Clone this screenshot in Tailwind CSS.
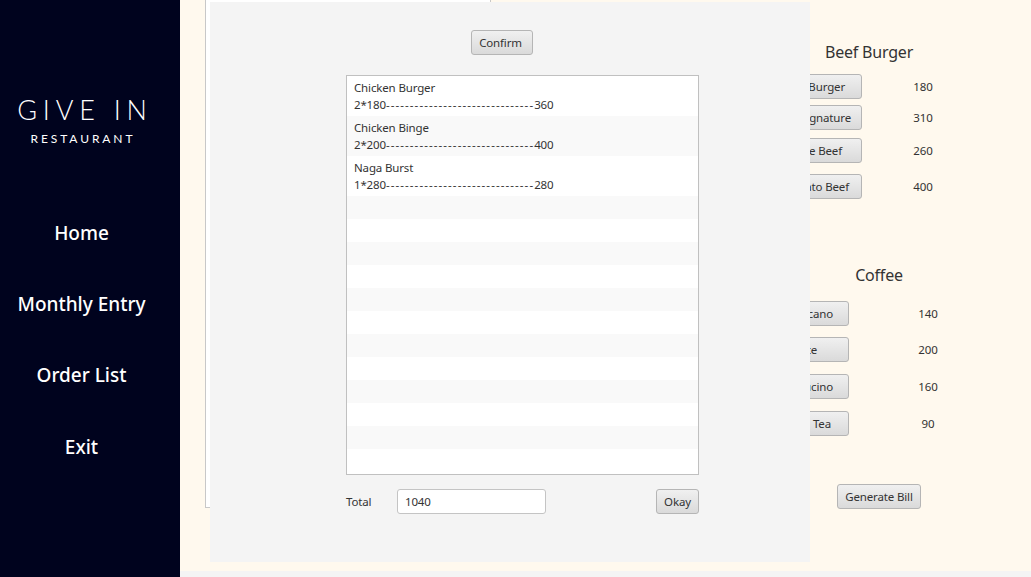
<!DOCTYPE html>
<html>
<head>
<meta charset="utf-8">
<script src="https://cdn.jsdelivr.net/npm/@tailwindcss/browser@4"></script>
</head>
<body class="bg-[#f4f4f4] font-['Noto_Sans',sans-serif] text-[11.5px] tracking-[-0.15px] text-[#333333] overflow-hidden">
<div class="relative flex w-[1031px] h-[577px]">
  <aside class="w-[180px] h-[577px] shrink-0 pr-[17px] bg-[#00031e] text-white flex flex-col items-center">
    <div class="mt-[94px] h-[32px] leading-[32px] text-[27px] font-['Lato',sans-serif] font-light tracking-[5.8px] pl-[7px] whitespace-nowrap">GIVE IN</div>
    <div class="mt-[5px] h-[16px] leading-[16px] text-[12px] font-['Lato',sans-serif] tracking-[2.9px] pl-[3px] whitespace-nowrap">RESTAURANT</div>
    <nav class="mt-[72px] flex flex-col items-center text-[19px] tracking-normal font-medium leading-[28px]">
      <div>Home</div>
      <div class="mt-[43px]">Monthly Entry</div>
      <div class="mt-[43px]">Order List</div>
      <div class="mt-[44px]">Exit</div>
    </nav>
  </aside>
  <main class="flex w-[851px] h-[571px] bg-[#fff9ee]">
    <div class="ml-[25px] w-[286px] h-[508px] shrink-0 bg-white border-l border-r border-b border-[#c8c8c8]"></div>
    <div class="flex-1 flex flex-col pt-[40px]">
      <div class="ml-[278px] w-[200px] h-[24px] leading-[24px] text-center text-[16px] tracking-[-0.2px]">Beef Burger</div>
      <div class="mt-[10px] flex">
        <button class="ml-[221px] w-[150px] h-[25px] pr-[16px] text-right rounded-[3px] border border-[#b5b5b5] bg-linear-to-b from-[#f0f0f0] to-[#dadada]">Beef Burger</button>
        <span class="ml-[41px] w-[40px] leading-[25px] text-center">180</span>
      </div>
      <div class="mt-[6px] flex">
        <button class="ml-[221px] w-[150px] h-[25px] pr-[10px] text-right rounded-[3px] border border-[#b5b5b5] bg-linear-to-b from-[#f0f0f0] to-[#dadada]">Signature</button>
        <span class="ml-[41px] w-[40px] leading-[25px] text-center">310</span>
      </div>
      <div class="mt-[8px] flex">
        <button class="ml-[221px] w-[150px] h-[25px] pr-[19px] text-right rounded-[3px] border border-[#b5b5b5] bg-linear-to-b from-[#f0f0f0] to-[#dadada]">Double Beef</button>
        <span class="ml-[41px] w-[40px] leading-[25px] text-center">260</span>
      </div>
      <div class="mt-[11px] flex">
        <button class="ml-[221px] w-[150px] h-[25px] pr-[12px] text-right rounded-[3px] border border-[#b5b5b5] bg-linear-to-b from-[#f0f0f0] to-[#dadada]">Potato Beef</button>
        <span class="ml-[41px] w-[40px] leading-[25px] text-center">400</span>
      </div>
      <div class="mt-[64px] ml-[288px] w-[200px] h-[24px] leading-[24px] text-center text-[16px] tracking-[-0.2px]">Coffee</div>
      <div class="mt-[14px] flex">
        <button class="ml-[208px] w-[150px] h-[25px] pr-[15px] text-right rounded-[3px] border border-[#b5b5b5] bg-linear-to-b from-[#f0f0f0] to-[#dadada]">Americano</button>
        <span class="ml-[59px] w-[40px] leading-[25px] text-center">140</span>
      </div>
      <div class="mt-[11px] flex">
        <button class="ml-[208px] w-[150px] h-[25px] pr-[31px] text-right rounded-[3px] border border-[#b5b5b5] bg-linear-to-b from-[#f0f0f0] to-[#dadada]">Latte</button>
        <span class="ml-[59px] w-[40px] leading-[25px] text-center">200</span>
      </div>
      <div class="mt-[12px] flex">
        <button class="ml-[208px] w-[150px] h-[25px] pr-[15px] text-right rounded-[3px] border border-[#b5b5b5] bg-linear-to-b from-[#f0f0f0] to-[#dadada]">Cappucino</button>
        <span class="ml-[59px] w-[40px] leading-[25px] text-center">160</span>
      </div>
      <div class="mt-[12px] flex">
        <button class="ml-[208px] w-[150px] h-[25px] pr-[17px] text-right rounded-[3px] border border-[#b5b5b5] bg-linear-to-b from-[#f0f0f0] to-[#dadada]">Green Tea</button>
        <span class="ml-[59px] w-[40px] leading-[25px] text-center">90</span>
      </div>
      <button class="mt-[48px] ml-[346px] w-[84px] h-[25px] rounded-[3px] border border-[#b5b5b5] bg-linear-to-b from-[#f0f0f0] to-[#dadada]">Generate Bill</button>
    </div>
  </main>
  <div class="absolute left-[210px] top-[2px] w-[600px] h-[560px] bg-[#f4f4f4] flex flex-col">
    <button class="mt-[28px] ml-[261px] w-[62px] h-[25px] pr-[3px] rounded-[3px] border border-[#b5b5b5] bg-linear-to-b from-[#f0f0f0] to-[#dadada]">Confirm</button>
    <div class="mt-[20px] ml-[136px] w-[353px] h-[400px] border border-[#c0c0c0] bg-white flex flex-col overflow-hidden">
      <div class="h-[40px] shrink-0 pl-[7px] pt-[3px] leading-[17px] bg-white"><div>Chicken Burger</div><div>2*180<span class="tracking-[1.08px]">-------------------------------</span>360</div></div>
      <div class="h-[40px] shrink-0 pl-[7px] pt-[3px] leading-[17px] bg-[#f9f9f9]"><div>Chicken Binge</div><div>2*200<span class="tracking-[1.08px]">-------------------------------</span>400</div></div>
      <div class="h-[40px] shrink-0 pl-[7px] pt-[3px] leading-[17px] bg-white"><div>Naga Burst</div><div>1*280<span class="tracking-[1.08px]">-------------------------------</span>280</div></div>
      <div class="h-[23px] shrink-0 bg-[#f9f9f9]"></div>
      <div class="h-[23px] shrink-0 bg-white"></div>
      <div class="h-[23px] shrink-0 bg-[#f9f9f9]"></div>
      <div class="h-[23px] shrink-0 bg-white"></div>
      <div class="h-[23px] shrink-0 bg-[#f9f9f9]"></div>
      <div class="h-[23px] shrink-0 bg-white"></div>
      <div class="h-[23px] shrink-0 bg-[#f9f9f9]"></div>
      <div class="h-[23px] shrink-0 bg-white"></div>
      <div class="h-[23px] shrink-0 bg-[#f9f9f9]"></div>
      <div class="h-[23px] shrink-0 bg-white"></div>
      <div class="h-[23px] shrink-0 bg-[#f9f9f9]"></div>
      <div class="h-[23px] shrink-0 bg-white"></div>
    </div>
    <div class="mt-[14px] ml-[136px] w-[353px] h-[25px] flex items-center">
      <span class="w-[51px]">Total</span>
      <div class="w-[149px] h-[25px] pl-[7px] leading-[23px] rounded-[3px] border border-[#c4c4c4] bg-white">1040</div>
      <button class="ml-auto w-[43px] h-[25px] rounded-[3px] border border-[#b5b5b5] bg-linear-to-b from-[#f0f0f0] to-[#dadada]">Okay</button>
    </div>
  </div>
</div>
</body>
</html>
